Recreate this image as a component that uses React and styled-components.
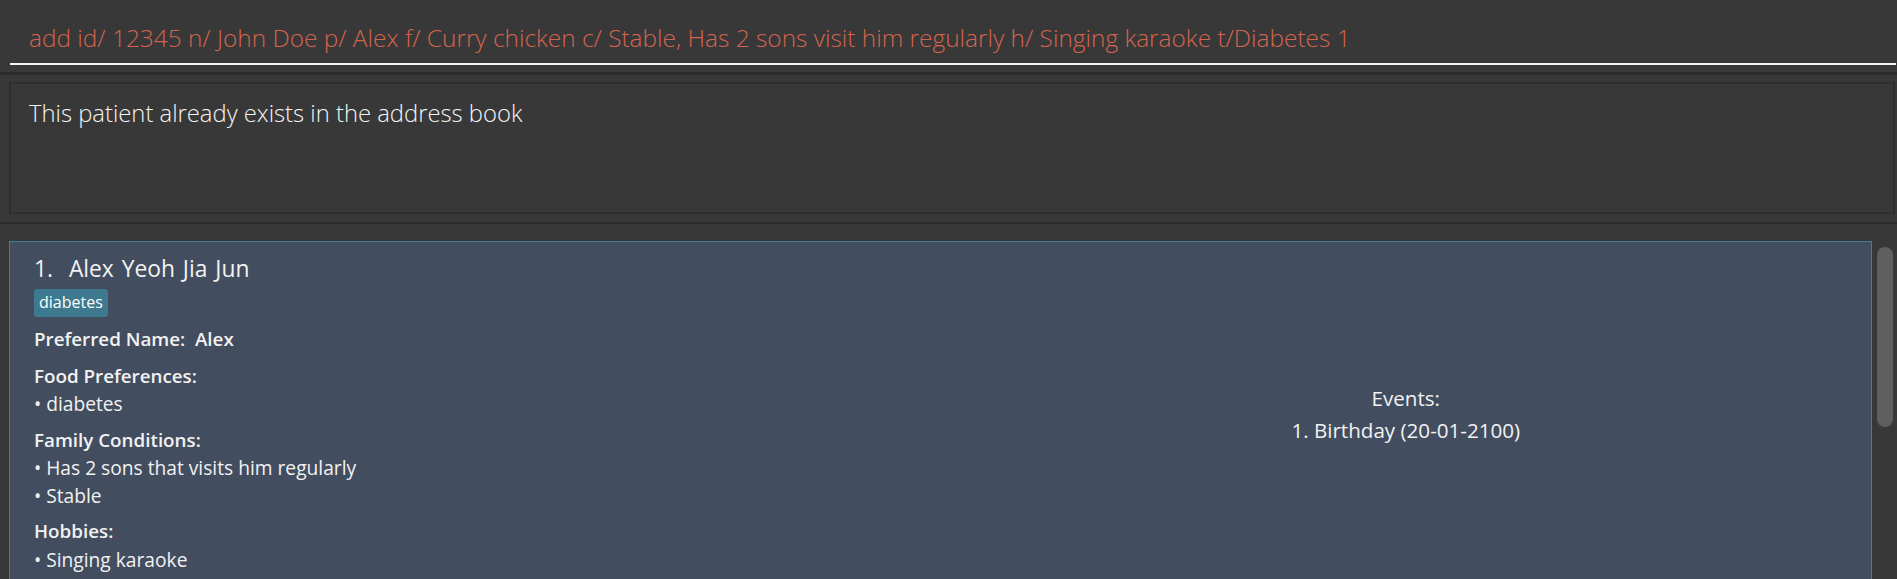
import React from 'react';
import styled, { createGlobalStyle } from 'styled-components';

const GlobalStyle = createGlobalStyle`
html, body {
    margin: 0;
    padding: 0;
    background-color: #383838;
    overflow: hidden;
}
body {
    font-family: 'Open Sans', 'Liberation Sans', sans-serif;
}
`

const Window = styled.div`
display: flex;
flex-direction: column;
height: 579px;
background-color: #383838;
overflow: hidden;
`

const CommandBar = styled.div`
box-sizing: border-box;
height: 75px;
padding: 12px 1px 0 10px;
border-bottom: 3px solid #2b2b2b;
`

const CommandInput = styled.div`
box-sizing: border-box;
height: 53px;
display: flex;
align-items: center;
padding: 0 0 1px 19px;
border-bottom: 2px solid #f2f2f2;
color: #d4644f;
font-size: 24.4px;
font-weight: 300;
white-space: nowrap;
`

const ResultPane = styled.div`
box-sizing: border-box;
height: 149px;
padding: 7px 2px 8px 9px;
border-bottom: 2px solid #2b2b2b;
`

const ResultBox = styled.div`
box-sizing: border-box;
height: 100%;
padding: 13px 18px;
border: 2px solid #2e2e2e;
color: #f4f4f4;
font-size: 23.8px;
font-weight: 300;
`

const ListPane = styled.div`
flex: 1;
display: flex;
gap: 5px;
padding: 17px 4px 0 9px;
min-height: 0;
`

const CardList = styled.div`
flex: 1;
display: flex;
flex-direction: column;
`

const Card = styled.div`
flex-shrink: 0;
display: grid;
grid-template-columns: 1fr 1fr;
padding: 12px 8px 14px 24px;
background-color: #424d5f;
border: 1px solid #3f809b;
color: #f2f2f2;
`

const Details = styled.div`
display: flex;
flex-direction: column;
align-items: flex-start;
`

const Name = styled.div`
font-size: 22.8px;
font-weight: 500;
line-height: 30px;
word-spacing: 2px;
`

const Tags = styled.div`
display: flex;
gap: 6px;
margin: 5px 0 9px;
`

const Tag = styled.span`
padding: 0 5px 1px;
border-radius: 3px;
background-color: #3d7a8f;
color: #ffffff;
font-size: 16px;
line-height: 27px;
`

const Field = styled.div`
margin-top: ${p => p.$gap || 0}px;
font-size: ${p => p.$bold ? 18.8 : 19.2}px;
font-weight: ${p => p.$bold ? 600 : 500};
line-height: 27.5px;
`

const Events = styled.div`
display: flex;
flex-direction: column;
align-items: center;
justify-content: center;
font-size: 20.6px;
font-weight: 500;
line-height: 32px;
text-align: center;
`

const ScrollTrack = styled.div`
width: 16px;
padding-top: 6px;
`

const ScrollThumb = styled.div`
height: 180px;
border-radius: 8px;
background-color: #5f5f5f;
`

const patient = {
    name: 'Alex Yeoh Jia Jun',
    tags: ['diabetes'],
    preferredName: 'Alex',
    food: ['diabetes'],
    family: ['Has 2 sons that visits him regularly', 'Stable'],
    hobbies: ['Singing karaoke'],
    events: ['Birthday (20-01-2100)'],
}

function Section({ title, items }) {
    return (
        <>
            <Field $bold $gap={9}>{title}</Field>
            {items.map((e, i) => <Field key={i}>• {e}</Field>)}
        </>
    )
}

export default function App() {
    return (
        <Window>
            <GlobalStyle />
            <CommandBar>
                <CommandInput>
                    add id/ 12345 n/ John Doe p/ Alex f/ Curry chicken c/ Stable, Has 2 sons visit him regularly h/ Singing karaoke t/Diabetes 1
                </CommandInput>
            </CommandBar>
            <ResultPane>
                <ResultBox>This patient already exists in the address book</ResultBox>
            </ResultPane>
            <ListPane>
                <CardList>
                    <Card>
                        <Details>
                            <Name>1.&nbsp; {patient.name}</Name>
                            <Tags>
                                {patient.tags.map(t => <Tag key={t}>{t}</Tag>)}
                            </Tags>
                            <Field $bold>Preferred Name:&nbsp; {patient.preferredName}</Field>
                            <Section title="Food Preferences:" items={patient.food} />
                            <Section title="Family Conditions:" items={patient.family} />
                            <Section title="Hobbies:" items={patient.hobbies} />
                        </Details>
                        <Events>
                            <div>Events:</div>
                            {patient.events.map((e, i) => <div key={i}>{i + 1}. {e}</div>)}
                        </Events>
                    </Card>
                </CardList>
                <ScrollTrack>
                    <ScrollThumb />
                </ScrollTrack>
            </ListPane>
        </Window>
    );
}
